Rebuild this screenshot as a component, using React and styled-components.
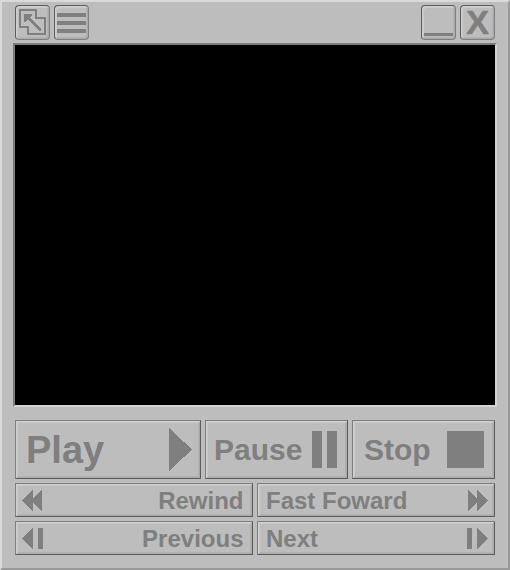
import React from "react";
import styled, { createGlobalStyle } from "styled-components";

const GlobalStyle = createGlobalStyle`
  * { box-sizing: border-box; }
  body { margin: 0; background: #bdbdbd; }
`;

const Window = styled.main`
  width: 510px;
  height: 570px;
  padding: 3px 11px 0;
  background: #bdbdbd;
  border: 2px solid;
  border-color: #dadada #999 #999 #dadada;
  color: #7f7f7f;
  font-family: "Liberation Sans", Arial, sans-serif;
  font-weight: 700;
  overflow: hidden;
`;

const TitleBar = styled.header`
  display: flex;
  justify-content: space-between;
  padding: 0 2px;
  height: 38px;
`;

const Group = styled.div`
  display: flex;
  gap: 4px;
`;

const Button = styled.button`
  display: flex;
  align-items: center;
  margin: 0;
  padding: 0;
  background: #bdbdbd;
  color: inherit;
  font: inherit;
  border: 1px solid;
  border-color: #7f7f7f #5c5c5c #5c5c5c #7f7f7f;
  box-shadow: inset 1px 1px #cecece, inset -1px -1px #a9a9a9,
    inset 2px 2px #c9c9c9, inset -2px -2px #b3b3b3;
`;

const TitleButton = styled(Button)`
  width: 35px;
  height: 35px;
  justify-content: center;
  border-radius: 4px;
  border-color: #5c5c5c #7f7f7f #7f7f7f #5c5c5c;
`;

const CloseLabel = styled.span`
  font-size: 34px;
  line-height: 33px;
  -webkit-text-stroke: 0.6px currentColor;
`;

const Screen = styled.div`
  width: 484px;
  height: 364px;
  background: #000;
  border: 2px solid;
  border-color: #7b7b7b #d4d4d4 #d4d4d4 #7b7b7b;
`;

const Controls = styled.section`
  display: grid;
  gap: 4px;
  padding: 13px 2px 0;
`;

const Row = styled.div`
  display: grid;
  gap: 4px;
  grid-template-columns: ${(p) => p.$columns};
  height: ${(p) => p.$height}px;
`;

const ControlButton = styled(Button)`
  justify-content: space-between;
  padding: 0 ${(p) => p.$right}px 0 ${(p) => p.$left}px;
  font-size: ${(p) => p.$size}px;
  line-height: 1;
  white-space: nowrap;
`;

const Label = styled.span`
  padding-top: 1px;
`;

const Glyph = styled.svg`
  display: block;
  flex: none;
  fill: currentColor;
  shape-rendering: crispEdges;
`;

const Icon = ({ w, h, d }) => (
  <Glyph width={w} height={h} viewBox={`0 0 ${w} ${h}`}>
    <path d={d} />
  </Glyph>
);

const ResizeIcon = () => (
  <Glyph width="33" height="33" viewBox="0 0 33 33">
    <path
      d="M4 4H20V12H29V28H12V21H4Z"
      fill="none"
      stroke="currentColor"
      strokeWidth="2"
    />
    <path d="M8 8H16V9L13.5 11.5L25 23V25H23L11.5 13.5L9 16H8Z" />
  </Glyph>
);

export default function App() {
  return (
    <>
      <GlobalStyle />
      <Window>
        <TitleBar>
          <Group>
            <TitleButton aria-label="Resize"><ResizeIcon /></TitleButton>
            <TitleButton aria-label="Menu">
              <Icon w={33} h={33} d="M2 7H31V11H2ZM2 15H31V19H2ZM2 23H31V27H2Z" />
            </TitleButton>
          </Group>
          <Group>
            <TitleButton aria-label="Minimize">
              <Icon w={33} h={33} d="M2 27H31V30H2Z" />
            </TitleButton>
            <TitleButton aria-label="Close"><CloseLabel>X</CloseLabel></TitleButton>
          </Group>
        </TitleBar>
        <Screen />
        <Controls>
          <Row $columns="186px 143px 143px" $height={59}>
            <ControlButton $size={38} $left={10} $right={8}>
              <Label>Play</Label>
              <Icon w={23} h={43} d="M0 0L23 21.5L0 43Z" />
            </ControlButton>
            <ControlButton $size={30} $left={8} $right={10}>
              <Label>Pause</Label>
              <Icon w={25} h={37} d="M0 0H10V37H0ZM15 0H25V37H15Z" />
            </ControlButton>
            <ControlButton $size={30} $left={11} $right={10}>
              <Label>Stop</Label>
              <Icon w={37} h={37} d="M0 0H37V37H0Z" />
            </ControlButton>
          </Row>
          <Row $columns="238px 238px" $height={34}>
            <ControlButton $size={24} $left={6} $right={8.5}>
              <Icon w={20} h={21} d="M0 10.5L11 0V21ZM9 10.5L20 0V21Z" />
              <Label>Rewind</Label>
            </ControlButton>
            <ControlButton $size={24} $left={8} $right={6}>
              <Label>Fast Foward</Label>
              <Icon w={20} h={21} d="M0 0L11 10.5L0 21ZM9 0L20 10.5L9 21Z" />
            </ControlButton>
          </Row>
          <Row $columns="238px 238px" $height={34}>
            <ControlButton $size={24} $left={6} $right={8.5}>
              <Icon w={21} h={21} d="M0 10.5L11 0V21ZM16 0H21V21H16Z" />
              <Label>Previous</Label>
            </ControlButton>
            <ControlButton $size={24} $left={8} $right={6}>
              <Label>Next</Label>
              <Icon w={21} h={21} d="M0 0H5V21H0ZM10 0L21 10.5L10 21Z" />
            </ControlButton>
          </Row>
        </Controls>
      </Window>
    </>
  );
}
